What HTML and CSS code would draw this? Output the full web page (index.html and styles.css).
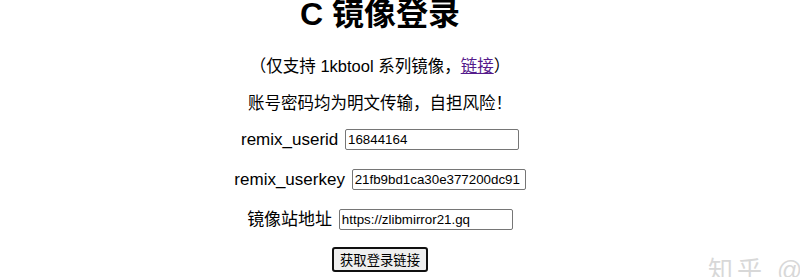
FILE: index.html
```html
<!DOCTYPE html>
<html>
<head>
    <meta charset="utf-8" />
    <title>C 镜像登录</title>
    <link rel="stylesheet" href="styles.css">
</head>
<body>
    <div class="page">
        <h1>C 镜像登录</h1>
        <p class="note first">（仅支持 1kbtool 系列镜像，<a href="#">链接</a>）</p>
        <p class="note">账号密码均为明文传输，自担风险！</p>

        <p class="row first">
            <label for="userid">remix_userid</label>
            <input id="userid" type="text" value="16844164">
        </p>
        <p class="row">
            <label for="userkey">remix_userkey</label>
            <input id="userkey" type="text" value="21fb9bd1ca30e377200dc91">
        </p>
        <p class="row">
            <label for="mirror">镜像站地址</label>
            <input id="mirror" type="text" value="https://zlibmirror21.gq">
        </p>
        <p class="row last">
            <button>获取登录链接</button>
        </p>
    </div>
    <div class="watermark">知乎 @</div>
</body>
</html>
```
FILE: styles.css
```css
html, body {
    margin: 0;
    overflow: hidden;
}

body {
    background-color: white;
    color: black;
    font-family: "Liberation Sans", "Noto Sans CJK SC", sans-serif;
    font-size: 16px;
    position: relative;
    height: 277px;
}

.page {
    width: 760px;
    text-align: center;
}

h1 {
    font-size: 32px;
    line-height: 38px;
    margin: -5px 0 0 0;
}

.note {
    font-size: 16.5px;
    line-height: 22px;
    margin: 15px 0 0 0;
}

.note.first {
    margin-top: 22px;
}

.note a {
    color: #551a8b;
}

.row {
    font-size: 17px;
    line-height: 24px;
    margin: 16px 0 0 0;
}

.row.first {
    margin-top: 14px;
}

.row.last {
    margin-top: 15px;
}

.row label {
    margin-right: 2px;
}

.row input {
    font-family: Arial, "Liberation Sans", sans-serif;
    font-size: 13.33px;
    width: 168px;
    height: 17px;
    padding: 1px 2px;
    border: 1px solid #767676;
    border-radius: 2px;
    vertical-align: 1px;
}

.row button {
    font-family: "Noto Sans CJK SC", sans-serif;
    font-size: 13.33px;
    padding: 1px 6px;
    border: 2px solid #101010;
    border-radius: 3px;
    background-color: #efefef;
}

.watermark {
    position: absolute;
    left: 708px;
    top: 250px;
    font-size: 25px;
    letter-spacing: 4px;
    color: #d8d8d8;
    white-space: nowrap;
}
```
